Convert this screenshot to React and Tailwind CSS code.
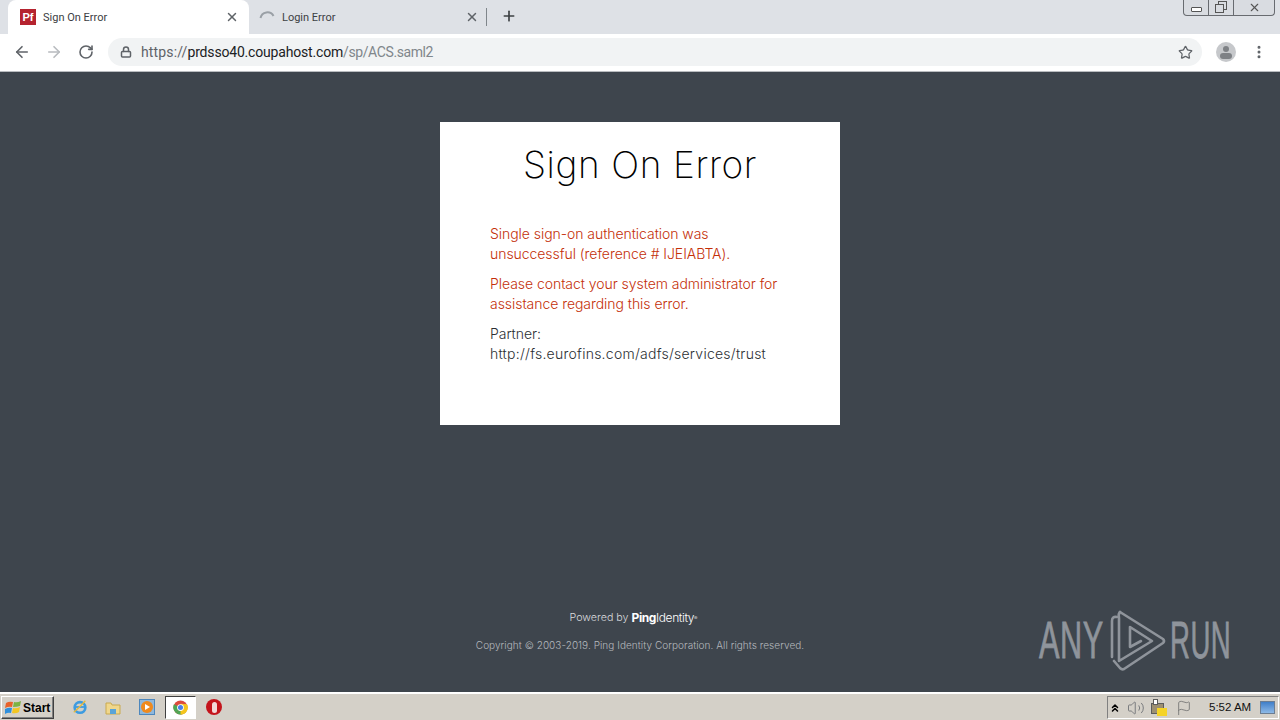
import React from "react";
import { ArrowLeft, ArrowRight, RotateCw, Lock, Star, MoreVertical, X, Plus, ChevronsUp, Volume2, Flag } from "lucide-react";

const UI = "font-['Roboto','Liberation_Sans',sans-serif]";

function Tab({ active, icon, title }) {
  return (
    <div className={`relative h-[34px] flex items-center shrink-0 ${active ? "w-[241px] bg-white rounded-t-[8px] ml-[8px] pl-[12px] pr-[7px]" : "w-[238px] pl-[10px] pr-[5px]"}`}>
      {icon}
      <span className={`text-[11px] text-[#3c4043] ml-[7px] pt-[2px] flex-1 ${UI}`}>{title}</span>
      <X size={14} strokeWidth={2.5} className="text-[#5f6368] mr-[3px]" />
    </div>
  );
}

function Watermark() {
  return (
    <div className="absolute left-[1039px] top-[610px] h-[62px] w-[194px] text-[#8f949b]">
      <span className="absolute left-0 top-[7px] text-[52px] leading-[46px] origin-left scale-x-[0.59] font-['Liberation_Sans',sans-serif] tracking-[1px] [-webkit-text-stroke:0.8px_#8f949b]">ANY</span>
      <svg className="absolute left-[71px] top-[-1px]" width="56" height="62" viewBox="0 0 56 62" fill="none" stroke="#8f949b" strokeWidth="2.6" strokeLinejoin="round" strokeLinecap="round">
        <path d="M2 48 V12 Q2 7 7 8" />
        <path d="M10 3 L53 30 Q55 32 53 34 L14 60 Q12 61 10 59 L4 52" />
        <path d="M10 3 Q8 5 9 9 V52 L42 32 L20 18 V38 L31 32" />
      </svg>
      <span className="absolute left-[131px] top-[7px] text-[52px] leading-[46px] origin-left scale-x-[0.53] font-['Liberation_Sans',sans-serif] tracking-[1px] [-webkit-text-stroke:0.8px_#8f949b]">RUN</span>
    </div>
  );
}

function WinLogo() {
  return (
    <svg width="17" height="15" viewBox="0 0 17 15">
      <path d="M1 3 Q4 1 8 2 L7 7 Q4 6 0 8 Z" fill="#e8622a" />
      <path d="M9 2 Q12 3 16 1 L15 6 Q12 7 8 7 Z" fill="#7cb342" />
      <path d="M0 9 Q4 7 7 8 L6 13 Q3 12 0 14 Z" fill="#2f8fdc" />
      <path d="M8 8 Q11 9 15 7 L14 12 Q11 14 7 13 Z" fill="#f3c622" />
    </svg>
  );
}

function Taskbar() {
  return (
    <div className="h-[28px] shrink-0 bg-[#d4d0c8] border-t-2 border-t-white flex items-center">
      <div className="ml-[1px] mt-[1px] h-[23px] w-[53px] border border-t-white border-l-white border-r-[#404040] border-b-[#404040] flex items-center pl-[3px] gap-[1px] text-[12px] font-bold text-black font-['Liberation_Sans',sans-serif] shadow-[inset_-1px_-1px_0_#808080]">
        <WinLogo />
        <span>Start</span>
      </div>
      <div className="ml-[18px] w-[16px] flex justify-center">
        <svg width="18" height="18" viewBox="0 0 18 18">
          <circle cx="9" cy="9.5" r="6" fill="none" stroke="#3d9be0" strokeWidth="3" />
          <path d="M4 9h10" stroke="#3d9be0" strokeWidth="2" />
          <path d="M2 15 Q8 10 15 2" fill="none" stroke="#e8b93a" strokeWidth="1.5" />
        </svg>
      </div>
      <div className="ml-[17px]">
        <svg width="16" height="16" viewBox="0 0 16 16">
          <path d="M1 4h5l1 2h8v9H1z" fill="#f0d78c" stroke="#c9a94f" />
          <path d="M5 10h6v5H5z" fill="#5aa4d8" />
        </svg>
      </div>
      <div className="ml-[18px] w-[16px] h-[16px] bg-[#8fb8dc] border border-[#4d87bd] flex items-center justify-center">
        <div className="w-[12px] h-[12px] rounded-full bg-[#ef8a1e] flex items-center justify-center">
          <div className="w-0 h-0 ml-[1px] border-y-[3px] border-y-transparent border-l-[5px] border-l-white" />
        </div>
      </div>
      <div className="ml-[10px] w-[31px] h-[23px] bg-white border border-t-[#404040] border-l-[#404040] border-r-white border-b-white flex items-center justify-center">
        <svg width="15" height="15" viewBox="0 0 16 16">
          <circle cx="8" cy="8" r="7.5" fill="#dd4b3d" />
          <path d="M8 8 L14.8 11 A7.5 7.5 0 0 1 3.5 14 Z" fill="#4da856" />
          <path d="M8 8 L1 4.5 A7.5 7.5 0 0 0 3.5 14 Z" fill="#4da856" />
          <path d="M8 4 L15 4.5 A7.5 7.5 0 0 1 8 15.5 Z" fill="#f5c51d" />
          <circle cx="8" cy="8" r="3.6" fill="#fff" />
          <circle cx="8" cy="8" r="2.7" fill="#4a80e8" />
        </svg>
      </div>
      <div className="ml-[10px] w-[16px] h-[16px] rounded-full bg-[#c4141c] flex items-center justify-center">
        <div className="w-[5px] h-[11px] rounded-full bg-[#f3d9d9]" />
      </div>
      <div className="ml-auto mr-[1px] mt-[1px] h-[23px] w-[172px] border border-t-[#808080] border-l-[#808080] border-r-white border-b-white flex items-center text-black">
        <ChevronsUp size={12} strokeWidth={3} className="ml-[1px]" />
        <Volume2 size={18} strokeWidth={1.3} className="ml-[6px] text-[#77797c]" />
        <div className="ml-[5px] relative w-[17px] h-[17px]">
          <div className="absolute left-[1px] top-[4px] w-[13px] h-[11px] bg-[#9c8f72] border border-[#5c5c5c]" />
          <div className="absolute left-[3px] top-0 w-[5px] h-[6px] bg-white border border-[#5c5c5c]" />
          <div className="absolute left-[7px] top-[9px] w-[10px] h-[8px] bg-[#f5d327]" />
        </div>
        <Flag size={16} strokeWidth={1.2} className="ml-[9px] text-[#6d6d6d]" />
        <span className="ml-[17px] text-[11.5px] font-['Liberation_Sans',sans-serif] text-[#111]">5:52 AM</span>
        <div className="ml-[9px] w-[15px] h-[13px] bg-gradient-to-b from-[#3f7fc9] to-[#8db9e6] border border-[#6b7d92]" />
      </div>
    </div>
  );
}

export default function App() {
  return (
    <div className="relative w-[1280px] h-[720px] overflow-hidden flex flex-col bg-[#3e454d]">
      <div className="h-[34px] shrink-0 bg-[#dee1e6] relative flex items-end">
        <Tab
          active
          title="Sign On Error"
          icon={<div className="w-[16px] h-[16px] bg-[#b5232f] text-white text-[11px] font-bold leading-[16px] text-center font-['Liberation_Sans',sans-serif]">Pf</div>}
        />
        <Tab
          title="Login Error"
          icon={
            <svg width="16" height="16" viewBox="0 0 16 16" fill="none">
              <path d="M1.5 9 A7 7 0 0 1 14.5 7" stroke="#9aa0a6" strokeWidth="2" />
            </svg>
          }
        />
        <div className="w-px h-[18px] bg-[#80868b] mb-[8px] -ml-[1px]" />
        <Plus size={16} strokeWidth={2.5} className="ml-[14px] mb-[10px] text-[#3c4043]" />
        <div className="absolute right-[1px] top-0 w-[92px] h-[16px] bg-[#d9dce1] border border-t-0 border-[#686b70] rounded-b-[4px] flex items-stretch mr-[4px]">
          <div className="w-[25px] border-r border-[#686b70] flex items-end justify-center pb-[3px]">
            <div className="w-[11px] h-[5px] border border-[#555] rounded-[1px] bg-white" />
          </div>
          <div className="w-[25px] border-r border-[#686b70] relative">
            <div className="absolute left-[9px] top-[1px] w-[9px] h-[9px] border border-[#555]" />
            <div className="absolute left-[6px] top-[4px] w-[9px] h-[9px] border border-[#555] bg-[#d9dce1]" />
          </div>
          <div className="flex-1 flex items-center justify-center">
            <X size={13} strokeWidth={2} className="text-[#555]" />
          </div>
        </div>
      </div>

      <div className="h-[38px] shrink-0 bg-white border-b border-b-[#b9bcc0] pb-[1px] flex items-center">
        <ArrowLeft size={18} strokeWidth={2.2} className="ml-[13px] text-[#5f6368]" />
        <ArrowRight size={18} strokeWidth={2.2} className="ml-[14px] text-[#b8bbbf]" />
        <RotateCw size={16} strokeWidth={2.4} className="ml-[15px] text-[#5f6368]" />
        <div className="ml-[14px] w-[1094px] h-[28px] rounded-full bg-[#f1f3f4] flex items-center">
          <Lock size={12} strokeWidth={3} className="ml-[12px] text-[#5f6368]" />
          <div className={`ml-[9px] text-[14px] flex-1 ${UI}`}>
            <span className="text-[#5f6368] tracking-[0.14px]">https://</span>
            <span className="text-[#202124] tracking-[-0.18px]">prdsso40.coupahost.com</span>
            <span className="text-[#80868b] tracking-[-0.4px]">/sp/ACS.saml2</span>
          </div>
          <Star size={15} strokeWidth={2} className="mr-[9px] text-[#5f6368]" />
        </div>
        <div className="ml-[14px] w-[20px] h-[20px] rounded-full bg-[#c6c8cb] relative overflow-hidden">
          <div className="absolute left-[7px] top-[4px] w-[6px] h-[6px] rounded-full bg-[#7e8185]" />
          <div className="absolute left-[4px] top-[11px] w-[12px] h-[6px] rounded-full bg-[#7e8185]" />
        </div>
        <MoreVertical size={16} strokeWidth={2.5} className="ml-[15px] text-[#5f6368]" />
      </div>

      <div className="flex-1 flex flex-col items-center min-h-0">
        <div className="mt-[50px] w-[400px] h-[303px] bg-white px-[50px] font-['Inter',sans-serif]">
          <h1 className="mt-[19px] text-center text-[37px] leading-[47px] font-extralight tracking-[0.6px] text-black">Sign On Error</h1>
          <div className="mt-[36px] text-[14px] leading-[20px] font-light text-[#c42f08] tracking-[-0.05px]">
            <p>Single sign-on authentication was<br />unsuccessful (reference # IJEIABTA).</p>
            <p className="mt-[10px]">Please contact your system administrator for<br />assistance regarding this error.</p>
          </div>
          <p className="mt-[10px] text-[14px] leading-[20px] font-light text-[#2b2f33]">
            <span className="tracking-[-0.05px]">Partner:</span><br />
            <span className="tracking-[0.25px]">http://fs.eurofins.com/adfs/services/trust</span>
          </p>
        </div>
        <div className="mt-[186px] mr-[13px] text-[10.7px] leading-[14px] text-[#d8dadd] flex items-center font-['Inter',sans-serif] font-light">
          <span>Powered by</span>
          <span className="ml-[3px] font-bold text-white text-[12px] tracking-[-0.4px]">Ping</span>
          <span className="text-white text-[12px] font-light tracking-[-0.4px]">Identity</span>
          <span className="text-[5px] self-start text-white">®</span>
        </div>
        <p className="mt-[13px] text-[10px] leading-[14px] font-light text-[#b5b9bd] font-['Inter',sans-serif] tracking-[0.05px]">Copyright © 2003-2019. Ping Identity Corporation. All rights reserved.</p>
      </div>

      <Watermark />
      <Taskbar />
    </div>
  );
}
